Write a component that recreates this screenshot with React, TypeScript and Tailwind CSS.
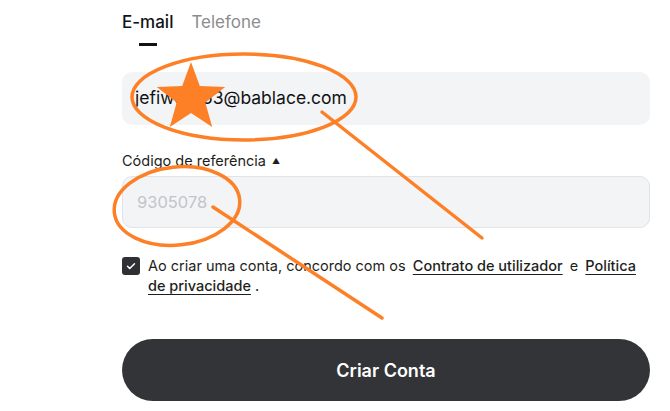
import React from "react";

function starPoints(cx: number, cy: number, R: number, r: number) {
  const pts: string[] = [];
  for (let i = 0; i < 10; i++) {
    const a = ((-90 + i * 36) * Math.PI) / 180;
    const rad = i % 2 === 0 ? R : r;
    pts.push(`${(cx + rad * Math.cos(a)).toFixed(1)},${(cy + rad * Math.sin(a)).toFixed(1)}`);
  }
  return pts.join(" ");
}

function Marks() {
  const orange = "#fd7f26";
  return (
    <svg className="absolute inset-0 pointer-events-none" width="670" height="411" viewBox="0 0 670 411">
      <ellipse cx="244" cy="97" rx="112" ry="43" fill="none" stroke={orange} strokeWidth="3.5" />
      <polygon points={starPoints(191, 98, 36, 15)} fill={orange} />
      <line x1="322" y1="112" x2="482" y2="238" stroke={orange} strokeWidth="3.5" strokeLinecap="round" />
      <ellipse cx="177" cy="206" rx="63" ry="39" fill="none" stroke={orange} strokeWidth="3.5" transform="rotate(-6 177 206)" />
      <line x1="213" y1="207" x2="382" y2="318" stroke={orange} strokeWidth="3.5" strokeLinecap="round" />
    </svg>
  );
}

export default function App() {
  return (
    <div className="relative w-[670px] h-[411px] overflow-hidden bg-white text-[#111214] font-['Inter','Liberation_Sans',sans-serif]">
      <div className="ml-[122px] w-[528px] pt-[10px] flex flex-col">
        {/* Tabs */}
        <div className="flex gap-[18px]">
          <div className="flex flex-col items-center">
            <span className="text-[17px] leading-[24px] font-medium">E-mail</span>
            <span className="mt-[9px] h-[3px] w-[18px] bg-[#111214]" />
          </div>
          <span className="text-[17px] leading-[24px] text-[#8b8c90]">Telefone</span>
        </div>

        {/* Email */}
        <div className="mt-[26px] h-[53px] rounded-[10px] bg-[#f3f4f6] px-[13px] flex items-center text-[17.5px]">
          jefiwo1653@bablace.com
        </div>

        {/* Referral */}
        <div className="mt-[26px] flex items-center gap-[6px] text-[14.5px] leading-[20px] text-[#1d1e20]">
          Código de referência
          <span className="text-[8px] leading-none">▲</span>
        </div>
        <div className="mt-[5px] h-[52px] rounded-[10px] border border-[#e1e3e6] bg-[#f3f4f6] px-[14px] flex items-center text-[16.5px] text-[#c2c5c9]">
          9305078
        </div>

        {/* Terms */}
        <div className="mt-[28px] flex gap-[8px]">
          <div className="mt-[1px] w-[18px] h-[18px] shrink-0 rounded-[3px] bg-[#2f3034] flex items-center justify-center">
            <svg width="12" height="12" viewBox="0 0 24 24" fill="none" stroke="white" strokeWidth="3" strokeLinecap="round" strokeLinejoin="round">
              <path d="M5 12.5l4.5 4.5L19 7.5" />
            </svg>
          </div>
          <p className="text-[14.5px] leading-[20px] text-[#1d1e20]">
            Ao criar uma conta, concordo com os{" "}
            <a className="ml-[3px] mr-[3px] underline underline-offset-[3px] font-medium">Contrato de utilizador</a>
            {" "}e{" "}
            <a className="ml-[3px] underline underline-offset-[3px] font-medium">Política de privacidade</a>
            {" "}.
          </p>
        </div>

        {/* Button */}
        <button className="mt-[43px] h-[62px] w-full rounded-full bg-[#333438] text-white text-[18px] font-semibold">
          Criar Conta
        </button>
      </div>
      <Marks />
    </div>
  );
}
